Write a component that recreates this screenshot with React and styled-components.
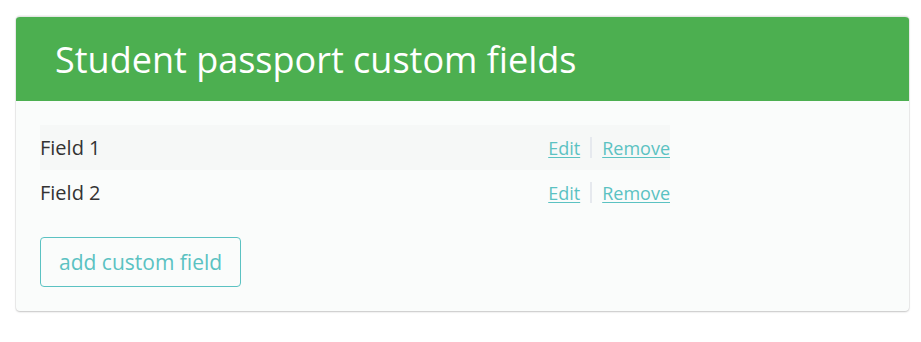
import React from "react";
import styled, { createGlobalStyle } from "styled-components";

const GlobalStyle = createGlobalStyle`
  body {
    margin: 0;
    background: #fff;
    font-family: "Open Sans", sans-serif;
  }
`;

const fields = [
  { id: 1, name: "Field 1" },
  { id: 2, name: "Field 2" },
];

const App = () => {
  return (
    <Page>
      <GlobalStyle />
      <Card>
        <Header>
          <Title>Student passport custom fields</Title>
        </Header>
        <Body>
          <List>
            {fields.map((field, i) => (
              <Row key={field.id} striped={i % 2 === 0}>
                <Name>{field.name}</Name>
                <Actions>
                  <Link href="#">Edit</Link>
                  <Divider />
                  <Link href="#">Remove</Link>
                </Actions>
              </Row>
            ))}
          </List>
          <AddButton type="button">add custom field</AddButton>
        </Body>
      </Card>
    </Page>
  );
};

const Page = styled.div`
  padding: 16px 12px 30px 16px;
`;

const Card = styled.div`
  border-radius: 4px;
  overflow: hidden;
  background: #fafcfb;
  border-top: 1px solid #e4e6e4;
  box-shadow: 0 1px 2px rgba(0, 0, 0, 0.2), 0 0 0 1px rgba(0, 0, 0, 0.04);
`;

const Header = styled.div`
  background: #4caf50;
  height: 84px;
  display: flex;
  align-items: center;
  padding: 0 39px;
`;

const Title = styled.h1`
  margin: 0;
  font-family: "Open Sans", sans-serif;
  font-weight: 400;
  font-size: 36px;
  color: #fff;
`;

const Body = styled.div`
  padding: 24px 24px 24px;
`;

const List = styled.div`
  width: 630px;
  margin-bottom: 22px;
`;

const Row = styled.div`
  display: flex;
  align-items: center;
  justify-content: space-between;
  height: 45px;
  background: ${(p) => (p.striped ? "#f6f8f7" : "transparent")};
`;

const Name = styled.span`
  font-size: 20px;
  color: #333;
`;

const Actions = styled.div`
  display: flex;
  align-items: center;
  gap: 10px;
`;

const Link = styled.a`
  font-size: 18px;
  color: #5bc2c2;
  text-decoration: underline;
  text-underline-offset: 2px;
`;

const Divider = styled.span`
  width: 2px;
  height: 21px;
  background: #e6e9ee;
`;

const AddButton = styled.button`
  height: 50px;
  padding: 0 18px;
  border: 1px solid #5bc2c2;
  border-radius: 4px;
  background: transparent;
  color: #5bc2c2;
  font-family: "Open Sans", sans-serif;
  font-size: 21px;
  cursor: pointer;
`;

export default App;
